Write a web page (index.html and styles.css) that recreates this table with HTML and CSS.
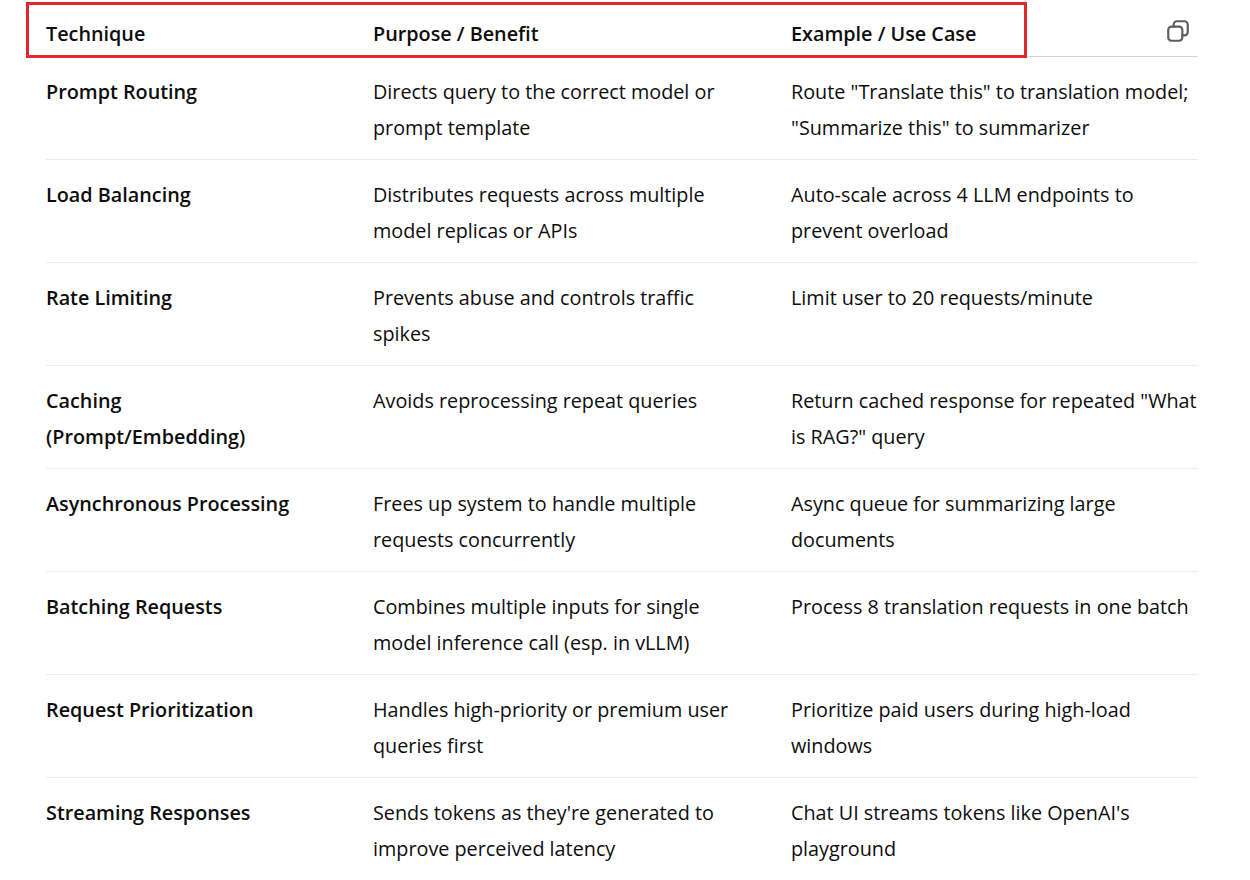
FILE: index.html
```html
<!DOCTYPE html>
<html lang="en">
<head>
<meta charset="utf-8">
<title>Techniques</title>
<link rel="stylesheet" href="styles.css">
</head>
<body>
<div class="page">
  <div class="table-wrap">
    <button class="copy" aria-label="Copy table">
      <svg viewBox="0 0 24 24" width="26" height="26" fill="none" stroke="currentColor" stroke-width="2" stroke-linejoin="round" stroke-linecap="round">
        <path d="M8 8V6a3 3 0 0 1 3-3h7a3 3 0 0 1 3 3v7a3 3 0 0 1-3 3h-2"/>
        <rect x="3" y="8" width="13" height="13" rx="3"/>
      </svg>
    </button>
    <table class="data">
      <colgroup>
        <col class="c1"><col class="c2"><col class="c3">
      </colgroup>
      <thead>
        <tr><th>Technique</th><th>Purpose / Benefit</th><th>Example / Use Case</th></tr>
      </thead>
      <tbody>
        <tr><td class="name">Prompt Routing</td><td>Directs query to the correct model or<br>prompt template</td><td>Route "Translate this" to translation model;<br>"Summarize this" to summarizer</td></tr>
        <tr><td class="name">Load Balancing</td><td>Distributes requests across multiple<br>model replicas or APIs</td><td>Auto-scale across 4 LLM endpoints to<br>prevent overload</td></tr>
        <tr><td class="name">Rate Limiting</td><td>Prevents abuse and controls traffic<br>spikes</td><td>Limit user to 20 requests/minute</td></tr>
        <tr><td class="name">Caching<br>(Prompt/Embedding)</td><td>Avoids reprocessing repeat queries</td><td>Return cached response for repeated "What<br>is RAG?" query</td></tr>
        <tr><td class="name">Asynchronous Processing</td><td>Frees up system to handle multiple<br>requests concurrently</td><td>Async queue for summarizing large<br>documents</td></tr>
        <tr><td class="name">Batching Requests</td><td>Combines multiple inputs for single<br>model inference call (esp. in vLLM)</td><td>Process 8 translation requests in one batch</td></tr>
        <tr><td class="name">Request Prioritization</td><td>Handles high-priority or premium user<br>queries first</td><td>Prioritize paid users during high-load<br>windows</td></tr>
        <tr><td class="name">Streaming Responses</td><td>Sends tokens as they're generated to<br>improve perceived latency</td><td>Chat UI streams tokens like OpenAI's<br>playground</td></tr>
      </tbody>
    </table>
  </div>
  <div class="highlight" aria-hidden="true"></div>
</div>
</body>
</html>
```

FILE: styles.css
```css
html, body {
  margin: 0;
  padding: 0;
  background: #ffffff;
}

body {
  font-family: "Open Sans", "Noto Sans", "Liberation Sans", sans-serif;
  font-size: 19.8px;
  color: #0d0d0d;
  overflow: hidden;
}

.page {
  position: relative;
  width: 1250px;
  height: 880px;
  overflow: hidden;
}

.table-wrap {
  position: relative;
  margin-left: 46px;
  width: 1152px;
}

.data {
  width: 1152px;
  table-layout: fixed;
  border-collapse: collapse;
  border-spacing: 0;
}

.c1 { width: 327px; }
.c2 { width: 418px; }
.c3 { width: 407px; }

.data th,
.data td {
  text-align: left;
  vertical-align: top;
  padding: 0;
  line-height: 36px;
  white-space: nowrap;
}

.data th {
  font-weight: 600;
  padding-top: 16px;
  padding-bottom: 4px;
  border-bottom: 1px solid #d4d4d4;
}

.data td {
  font-weight: 400;
  padding-top: 17px;
  padding-bottom: 13px;
  border-bottom: 1px solid #ececec;
}

.data td.name {
  font-weight: 600;
}

.copy {
  position: absolute;
  top: 18px;
  right: 7px;
  width: 26px;
  height: 26px;
  padding: 0;
  border: 0;
  background: transparent;
  color: #5d5d5d;
  cursor: pointer;
}

.copy svg {
  display: block;
}

.highlight {
  position: absolute;
  left: 26px;
  top: 2px;
  width: 995px;
  height: 50px;
  border: 3px solid #e2262b;
  pointer-events: none;
}
```
